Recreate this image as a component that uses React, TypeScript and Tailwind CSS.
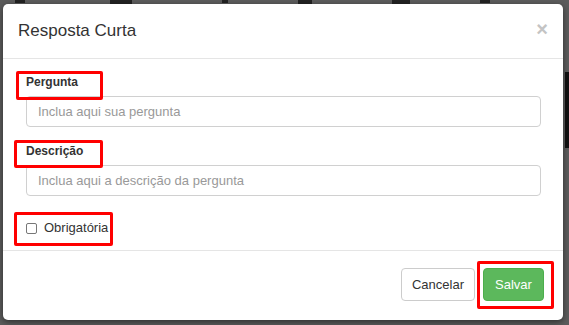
import React from "react";

const font = { fontFamily: '"Liberation Sans", Arial, sans-serif' };

function RedBox({ className }: { className: string }) {
  return <div className={`absolute border-[3px] border-[#ff0000] rounded-[2px] pointer-events-none ${className}`} />;
}

export default function App() {
  return (
    <div className="relative w-[569px] h-[325px] overflow-hidden bg-[#5c5c5c]" style={font}>
      {/* faint background page fragments */}
      <div className="absolute top-0 left-0 w-full h-[5px] flex">
        <div className="ml-[15px] w-[10px] h-[3px] bg-[#222]" />
        <div className="ml-[85px] w-[22px] h-[4px] bg-[#222]" />
        <div className="ml-[90px] w-[6px] h-[3px] bg-[#222]" />
        <div className="ml-[70px] w-[14px] h-[4px] bg-[#222]" />
        <div className="ml-[80px] w-[18px] h-[4px] bg-[#222]" />
        <div className="ml-[70px] w-[10px] h-[3px] bg-[#222]" />
      </div>
      <div className="absolute left-[565px] top-[72px] w-[4px] h-[76px] bg-[#111]" />

      <div className="relative ml-[3px] mt-[4px] w-[560px] h-[316px] bg-white rounded-[5px] shadow-[0_2px_6px_rgba(0,0,0,0.5)] flex flex-col">
        {/* header */}
        <div className="h-[55px] border-b border-[#e5e5e5] flex items-center justify-between pl-[15px] pr-[15px] shrink-0">
          <span className="text-[17px] text-[#333] leading-none mt-[-2px]">Resposta Curta</span>
          <span className="text-[20px] font-bold text-[#c4c4c4] leading-none mt-[-4px]">×</span>
        </div>
        {/* body */}
        <div className="h-[192px] border-b border-[#e5e5e5] pl-[23px] pr-[22px] pt-[15px] shrink-0">
          <div className="text-[12px] font-bold text-[#333] leading-[16px]">Pergunta</div>
          <div className="mt-[6px] h-[31px] border border-[#d0d0d0] rounded-[4px] flex items-center pl-[11px] text-[13px] text-[#999]">
            Inclua aqui sua pergunta
          </div>
          <div className="mt-[16px] text-[12px] font-bold text-[#333] leading-[16px]">Descrição</div>
          <div className="mt-[6px] h-[31px] border border-[#d0d0d0] rounded-[4px] flex items-center pl-[11px] text-[13px] text-[#999]">
            Inclua aqui a descrição da pergunta
          </div>
          <div className="mt-[24px] h-[16px] flex items-center">
            <span className="w-[11px] h-[11px] border border-[#777] rounded-[2px] bg-white" />
            <span className="ml-[7px] text-[13px] text-[#333] leading-[16px]">Obrigatória</span>
          </div>
        </div>
        {/* footer */}
        <div className="flex-1 flex justify-end items-start pt-[17px] pr-[19px]">
          <div className="h-[33px] w-[74px] border border-[#ccc] rounded-[4px] bg-white flex items-center justify-center text-[13px] text-[#333]">
            Cancelar
          </div>
          <div className="ml-[8px] h-[33px] w-[61px] rounded-[4px] bg-[#5cb85c] border border-[#4cae4c] flex items-center justify-center text-[13px] text-white">
            Salvar
          </div>
        </div>

        <RedBox className="left-[13px] top-[67px] w-[87px] h-[29px]" />
        <RedBox className="left-[11px] top-[136px] w-[89px] h-[28px]" />
        <RedBox className="left-[11px] top-[208px] w-[99px] h-[34px]" />
        <RedBox className="left-[474px] top-[257px] w-[77px] h-[48px]" />
      </div>
    </div>
  );
}
